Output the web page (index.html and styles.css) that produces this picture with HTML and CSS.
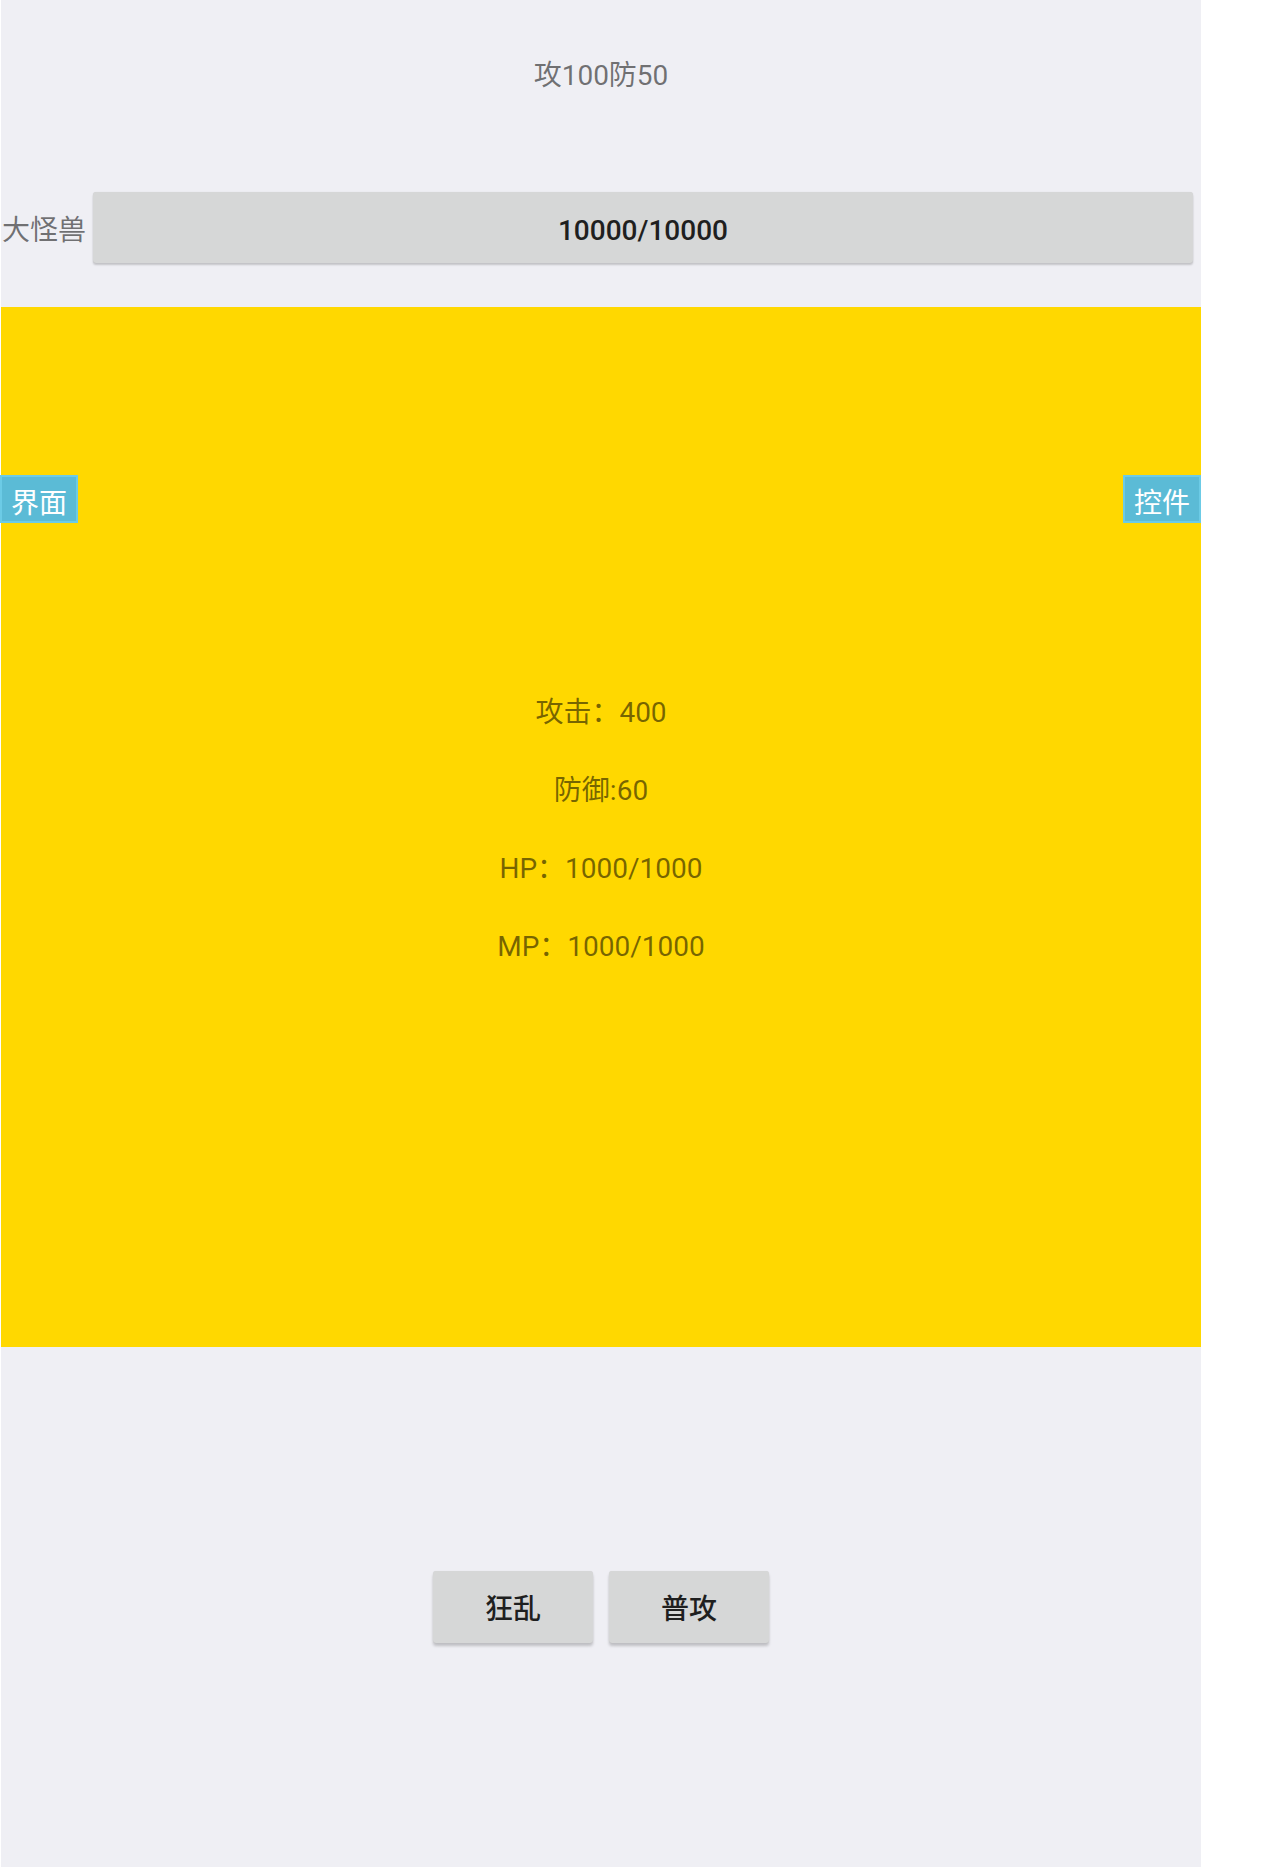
FILE: index.html
```html
<!DOCTYPE html>
<html>
<head>
<meta charset="utf-8">
<title>大怪兽</title>
<link rel="stylesheet" href="styles.css">
</head>
<body>
<div class="screen">
	<div class="boss-stats">攻100防50</div>

	<div class="boss-row">
		<span class="boss-name">大怪兽</span>
		<div class="boss-hp">10000/10000</div>
	</div>

	<div class="arena">
		<div class="side-tabs">
			<span class="tab">界面</span>
			<span class="tab">控件</span>
		</div>
		<div class="hero">
			<p>攻击：400</p>
			<p>防御:60</p>
			<p>HP：1000/1000</p>
			<p>MP：1000/1000</p>
		</div>
	</div>

	<div class="actions">
		<button class="btn">狂乱</button>
		<button class="btn">普攻</button>
	</div>
</div>
</body>
</html>
```

FILE: styles.css
```css
html, body {
	margin: 0;
	background: #fff;
}

.screen {
	width: 1200px;
	height: 1867px;
	margin-left: 1px;
	background: #efeff4;
	display: flex;
	flex-direction: column;
	font-family: Roboto, "Noto Sans CJK SC", sans-serif;
	font-size: 28px;
	color: rgba(0, 0, 0, .54);
}

.boss-stats {
	text-align: center;
	line-height: 40px;
	padding-top: 56px;
}

.boss-row {
	display: flex;
	align-items: center;
	margin-top: 96px;
	padding-right: 8px;
}

	.boss-name {
		width: 92px;
		padding: 6px 0 0 1px;
		box-sizing: border-box;
		line-height: 40px;
	}

	.boss-hp {
		flex: 1;
		height: 65px;
		padding-top: 6px;
		line-height: 65px;
		text-align: center;
		background: #d6d7d7;
		border-radius: 3px;
		box-shadow: 0 2px 2px rgba(0, 0, 0, .18), 0 0 1px rgba(0, 0, 0, .12);
		color: #1f1f1f;
		font-weight: 500;
	}

.arena {
	margin-top: 44px;
	height: 1040px;
	background: #ffd800;
	display: grid;
}

	.side-tabs,
	.hero {
		grid-area: 1 / 1;
	}

	.side-tabs {
		align-self: start;
		margin-top: 168px;
		display: flex;
		justify-content: space-between;
	}

	.tab {
		width: 74px;
		height: 40px;
		padding-top: 4px;
		line-height: 46px;
		text-align: center;
		background: #5bbbd6;
		border: 2px solid #6ccbe6;
		color: #fff;
	}

	.tab:first-child {
		margin-left: -1px;
	}

	.hero {
		align-self: center;
		text-align: center;
		padding-top: 6px;
	}

		.hero p {
			margin: 0;
			line-height: 40px;
		}

		.hero p + p {
			margin-top: 38px;
		}

.actions {
	flex: 1;
	display: flex;
	justify-content: center;
	align-items: center;
	gap: 16px;
}

.btn {
	width: 160px;
	height: 72px;
	border: 0;
	border-radius: 3px;
	background: #d6d7d7;
	box-shadow: 0 3px 3px rgba(0, 0, 0, .2), 0 0 1px rgba(0, 0, 0, .1);
	font: 500 28px Roboto, "Noto Sans CJK SC", sans-serif;
	color: #1f1f1f;
	padding: 0;
}
```
